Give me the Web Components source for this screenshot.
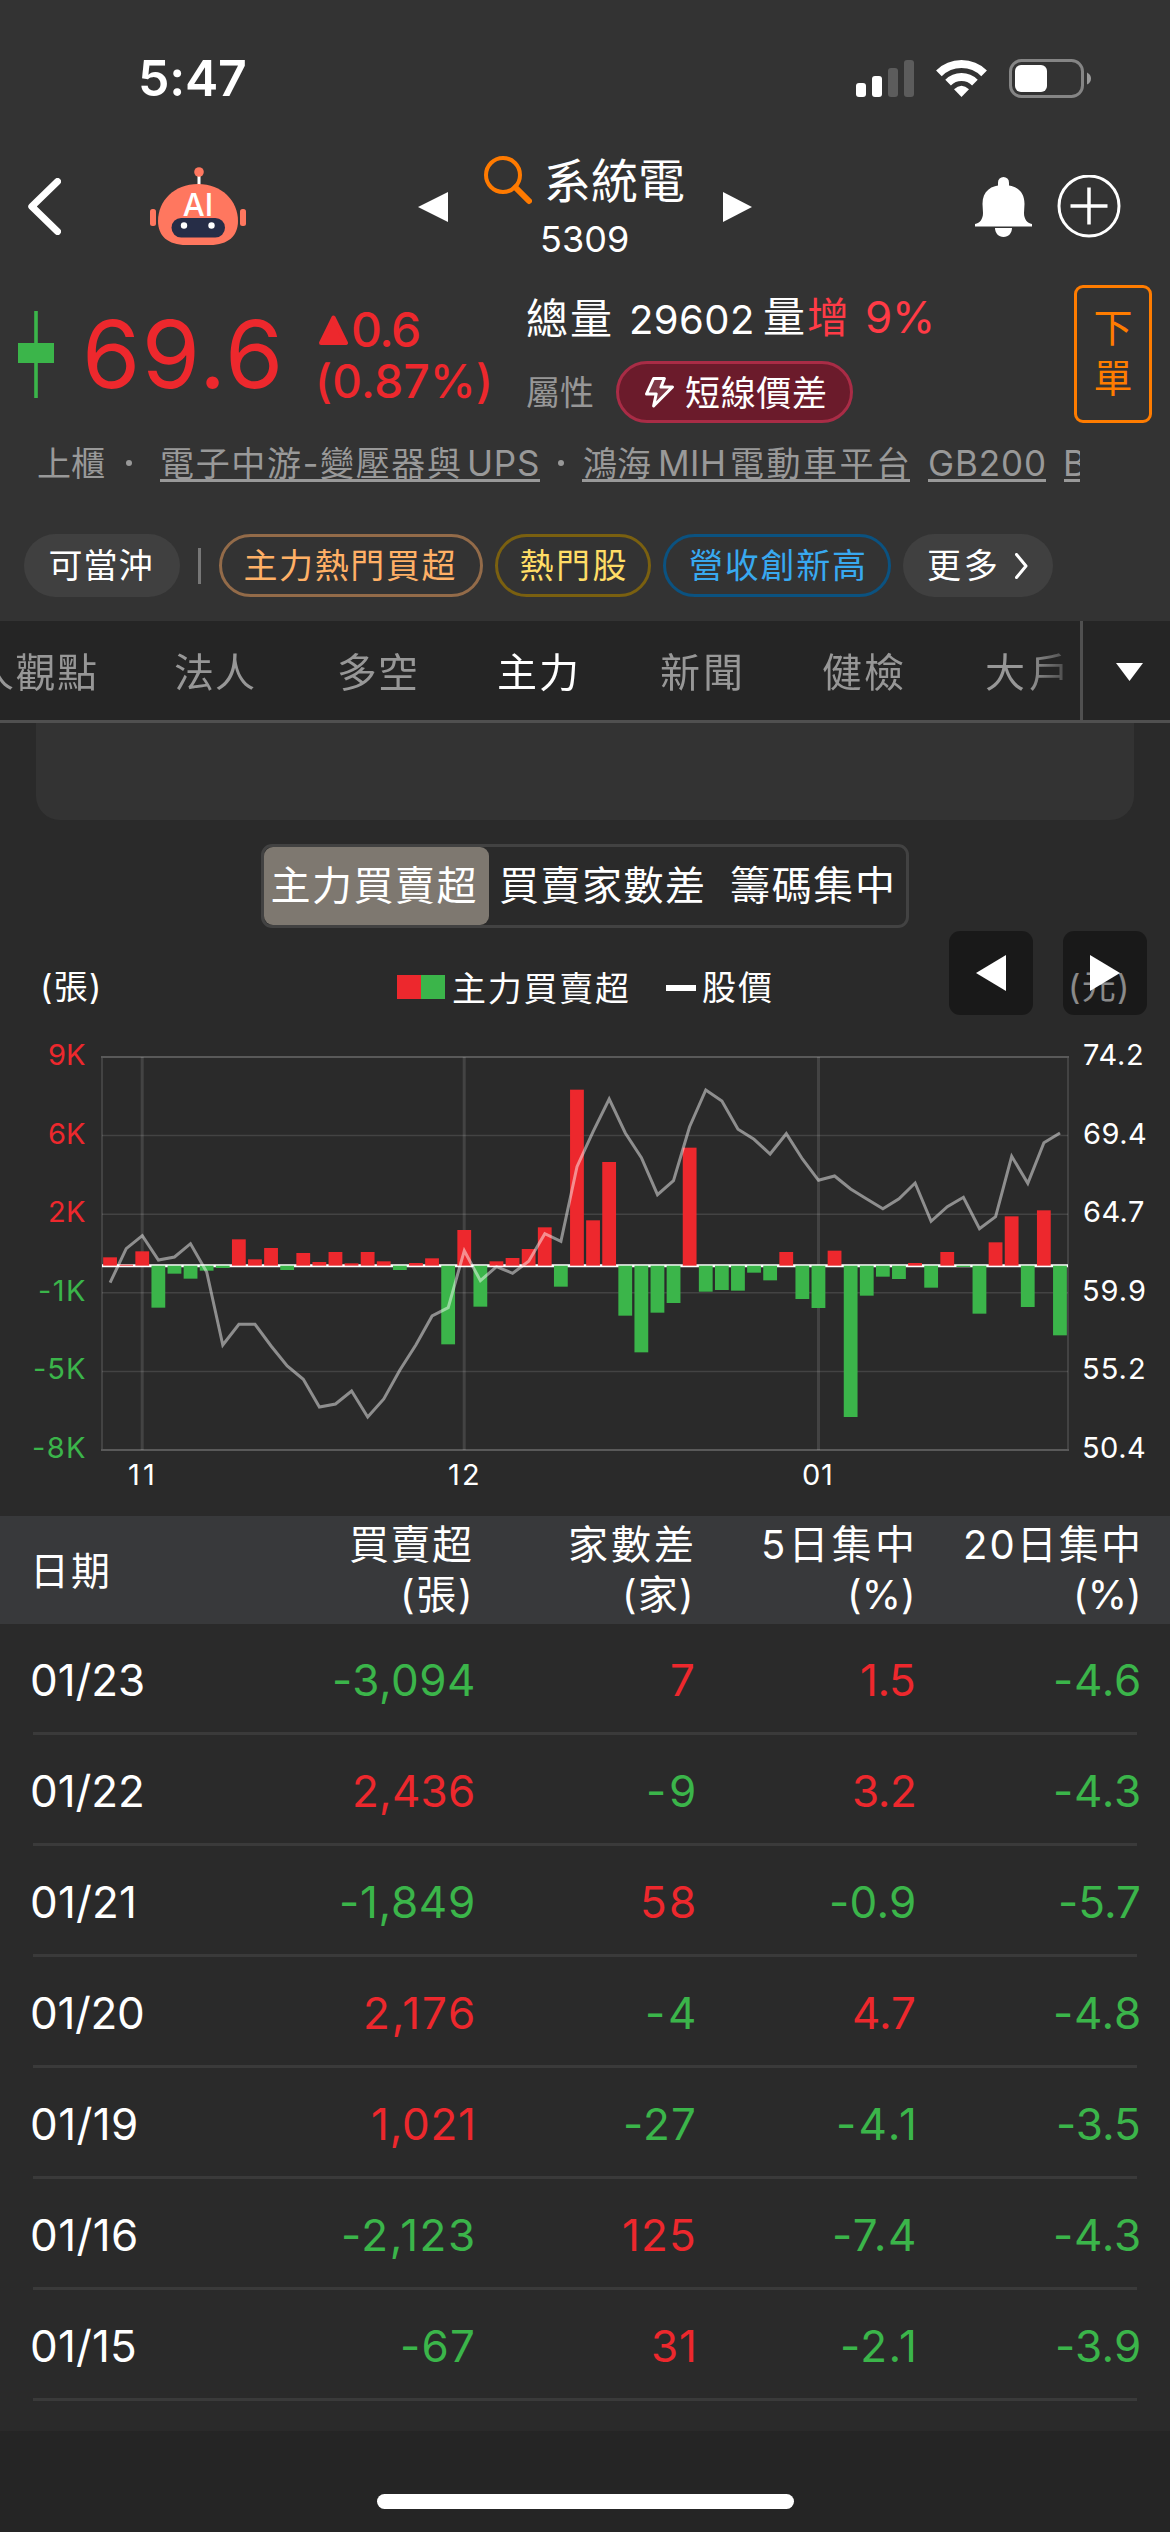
<!DOCTYPE html>
<html lang="zh-Hant">
<head>
<meta charset="utf-8">
<title>系統電 5309</title>
<style>
html,body{margin:0;padding:0;background:#2a2a2a}
body{width:1170px;height:2532px;overflow:hidden;font-family:Inter,"Noto Sans CJK TC",sans-serif;color:#fff}
</style>
</head>
<body>
<stock-app></stock-app>
<script>
const FAMILY = 'Inter, "Noto Sans CJK TC", sans-serif';
const pen = document.createElement('canvas').getContext('2d');

function define(name, html, setup) {
  customElements.define(name, class extends HTMLElement {
    constructor() {
      super();
      const t = document.createElement('template');
      t.innerHTML = typeof html === 'function' ? html() : html;
      this.attachShadow({ mode: 'open' }).appendChild(t.content.cloneNode(true));
    }
    connectedCallback() { if (setup) setup.call(this); }
  });
}

/* Text whose box is the ink of its glyphs: s = size, w = width, wt = weight, v = sample that sets the height */
define('fit-text', `<style>
:host{display:flow-root;flex:none}
span{display:block;white-space:nowrap}
</style><span><slot></slot></span>`, function () {
  const text = this.textContent, s = +this.getAttribute('s'), wt = this.getAttribute('wt') || 400;
  pen.font = `${wt} ${s}px ${FAMILY}`;
  const m = pen.measureText(text), v = pen.measureText(this.getAttribute('v') || text);
  const ink = m.actualBoundingBoxRight + m.actualBoundingBoxLeft;
  const w = +this.getAttribute('w') || ink, n = [...text].length - 1;
  const line = Math.round(s * 1.2);
  const span = this.shadowRoot.querySelector('span');
  this.style.width = w + 'px';
  this.style.height = (v.actualBoundingBoxAscent + v.actualBoundingBoxDescent) + 'px';
  span.style.cssText = `font:${wt} ${s}px/${line}px ${FAMILY};letter-spacing:${n ? (w - ink) / n : 0}px;` +
    `margin-left:${m.actualBoundingBoxLeft}px;` +
    `margin-top:${v.actualBoundingBoxAscent - (line + m.fontBoundingBoxAscent - m.fontBoundingBoxDescent) / 2}px`;
});

define('status-bar', `<style>
:host{display:flex;align-items:center;height:156px;padding:0 79px 0 141px}
svg{display:block}.sig{margin-left:auto}.wifi{margin:0 22px}
</style>
<fit-text s="50" w="104" wt="600">5:47</fit-text>
<svg class="sig" width="58" height="37"><g fill="#fff"><rect y="23" width="10" height="14" rx="3"/><rect x="16" y="16" width="10" height="21" rx="3"/></g><g fill="#5c5c5c"><rect x="32" y="8" width="10" height="29" rx="3"/><rect x="48" width="10" height="37" rx="3"/></g></svg>
<svg class="wifi" width="51" height="37"><g fill="none" stroke="#fff" stroke-width="8"><path d="M2.9 13.4A32 32 0 0 1 48.1 13.4"/><path d="M12.1 22.6A19 19 0 0 1 38.9 22.6"/></g><path fill="#fff" d="M25.5 37L18 29.3Q25.5 22.3 33 29.3Z"/></svg>
<svg width="82" height="39"><rect x="1.5" y="1.5" width="72" height="36" rx="11" fill="none" stroke="#858585" stroke-width="3"/><rect x="6" y="6" width="32" height="27" rx="6" fill="#fff"/><path d="M78 13.5Q82 15.5 82 19.5T78 25.5Z" fill="#9a9a9a"/></svg>`);

define('robot-icon', `<style>:host{display:block;flex:none}svg{display:block}text{font:500 31px Inter,sans-serif}</style>
<svg width="96" height="78" viewBox="150 166 96 78"><path d="M199 174V185" stroke="#fff" stroke-width="3"/><circle cx="199" cy="171" r="4.8" fill="#ff775f"/>
<g fill="#ff775f"><rect x="150" y="208" width="6" height="17" rx="2.5"/><rect x="240" y="208" width="6" height="17" rx="2.5"/><path d="M198 183C222 183 238 200 238 220C238 235 228 244 210 244H186C168 244 158 235 158 220C158 200 174 183 198 183Z"/></g>
<rect x="171.5" y="217" width="53.5" height="19.500" rx="9.700" fill="#262d47"/><circle cx="184" cy="224.500" r="3.200" fill="#fff"/><circle cx="211.500" cy="224.500" r="3.200" fill="#fff"/>
<text x="198" y="215" text-anchor="middle" fill="#fff">AI</text></svg>`);

define('nav-bar', `<style>
:host{display:flex;align-items:center;height:101px;padding:0 49px 0 28px}
svg{display:block;flex:none}
robot-icon{margin-left:89px;margin-bottom:2px}
.l{margin-left:172px}.r{margin-left:39px}
.title{margin-left:36px;align-self:flex-start;width:200px;display:flex;flex-direction:column;align-items:center;gap:23px}
.row{display:flex;width:200px;height:46px;justify-content:space-between;align-items:flex-start}
.row fit-text{margin-top:2px}
.bell{margin-left:auto}.add{margin-left:25px}
</style>
<svg width="33" height="57" fill="none" stroke="#fff" stroke-width="7" stroke-linecap="round" stroke-linejoin="round"><path d="M29.500 3.500L3.800 28.500L29.500 53.500"/></svg>
<robot-icon></robot-icon>
<svg class="l" width="30" height="30"><path d="M0 15L30 0V30Z" fill="#fff"/></svg>
<div class="title"><div class="row"><svg width="48" height="49" fill="none" stroke="#ff7a00"><circle cx="19" cy="19" r="17" stroke-width="4"/><path d="M31.500 31.500L45 45" stroke-width="6" stroke-linecap="round"/></svg><fit-text s="47" w="137">系統電</fit-text></div><fit-text style="margin-left:2px" s="36" w="86">5309</fit-text></div>
<svg class="r" width="30" height="30"><path d="M0 0L29 15L0 30Z" fill="#fff"/></svg>
<svg class="bell" width="57" height="60" fill="#fff"><rect x="23" width="11" height="14" rx="5.500"/><path d="M0 47C5 46 8 42 8 36L7.500 27C7.500 14 16 8 28.500 8C41 8 49.500 14 49.500 27L49 36C49 42 52 46 57 47V49.500H0Z"/><path d="M20 51H37C37 56 33.500 60 28.500 60S20 56 20 51Z"/></svg>
<svg class="add" width="64" height="63" fill="none" stroke="#fff" stroke-width="3"><circle cx="32" cy="31" r="30"/><path d="M13.500 31H50.500M32 12.500V49.500" stroke-width="3.500"/></svg>`);

define('attr-pill', `<style>
:host{display:flex;align-items:center;box-sizing:border-box;width:237px;height:62px;border:3px solid #a92c46;border-radius:31px;background:#6b1b2b;padding-left:26px;gap:12px}
</style><svg width="29" height="31" viewBox="0 0 29 31" fill="#ffffff22" stroke="#fff" stroke-width="3" stroke-linejoin="round"><path d="M8.600 1.500H19.400L16 10H27.500L8.600 29L11.200 17H1.500Z"/></svg><slot></slot>`);

define('quote-panel', `<style>
:host{display:flex;align-items:center;height:138px;padding:28px 18px 0 18px}
svg{display:block;flex:none}
.price{margin-left:33px;color:#ed282d}
.chg{margin:7px 0 0 41px;width:171px;display:flex;flex-direction:column;gap:13px;color:#ed282d}
.chg div{display:flex;gap:5px;align-items:center}
.info{margin-left:37px;align-self:flex-end;height:126px;display:flex;flex-direction:column;justify-content:space-between}
.v{display:flex;height:40px;align-items:center}.v fit-text:nth-child(2){margin:4px 0 0 21px}.v fit-text:nth-child(3){margin-left:12px}
.v .up{color:#ff3b46;margin-left:4px}.v .up2{color:#ff3b46;margin:1px 0 0 19px}
.a{display:flex;align-items:center;gap:23px;color:#979797}.a attr-pill{color:#fff}
.order{margin-left:auto;box-sizing:border-box;width:78px;height:138px;border:3px solid #ff7c00;border-radius:9px;color:#ff7c00;display:flex;flex-direction:column;align-items:center;justify-content:center;gap:15px}
</style>
<svg width="36" height="87" fill="#3bb54a"><rect x="16.200" width="3.600" height="87"/><rect y="32" width="36" height="20"/></svg>
<fit-text class="price" s="94" w="191">69.6</fit-text>
<div class="chg"><div><svg width="29" height="30"><path d="M14.500 2.500L27 28H2Z" fill="#ed282d" stroke="#ed282d" stroke-width="4" stroke-linejoin="round"/></svg><fit-text s="48" w="66" wt="450">0.6</fit-text></div><fit-text s="46" w="170" wt="450">(0.87%)</fit-text></div>
<div class="info"><div class="v"><fit-text s="42" w="84">總量</fit-text><fit-text s="40" w="120">29602</fit-text><fit-text s="42" w="40">量</fit-text><fit-text class="up" s="42" w="40">增</fit-text><fit-text class="up2" s="44" w="64">9%</fit-text></div>
<div class="a"><fit-text s="34" w="66">屬性</fit-text><attr-pill><fit-text s="35" w="140">短線價差</fit-text></attr-pill></div></div>
<div class="order"><fit-text s="39">下</fit-text><fit-text s="39">單</fit-text></div>`);

define('concept-links', `<style>
:host{display:flex;box-sizing:border-box;width:1080px;height:36px;margin-top:23px;padding-left:38px;overflow-x:clip;overflow-y:visible;color:#999}
div{display:flex;flex:none;height:33px;align-items:center}
.a{border-bottom:3px solid #999;padding:0 2px}
i{width:6px;height:6px;border-radius:3px;background:#999}
</style>
<div><fit-text s="34" w="66">上櫃</fit-text></div><div style="margin:0 28px 0 22px"><i></i></div>
<div class="a"><fit-text s="34" w="298">電子中游-變壓器與</fit-text><fit-text style="margin-left:10px" s="35" w="68">UPS</fit-text></div><div style="margin:0 18px"><i></i></div>
<div class="a"><fit-text s="34" w="66">鴻海</fit-text><fit-text style="margin-left:11px" s="35" w="62">MIH</fit-text><fit-text style="margin-left:9px" s="34" w="176">電動車平台</fit-text></div>
<div class="a" style="margin-left:18px"><fit-text s="35" w="114">GB200</fit-text></div>
<div class="a" style="margin-left:18px"><fit-text s="35">B</fit-text></div>`);

define('tag-pill', `<style>
:host{display:flex;align-items:center;justify-content:center;flex:none;box-sizing:border-box;height:63px;border:3px solid var(--line,transparent);border-radius:32px;gap:19px}
:host([solid]){background:#404040;border:0}
</style><slot></slot>`, function () { this.style.width = this.getAttribute('width') + 'px'; });

define('tag-row', `<style>
:host{display:flex;align-items:center;margin-top:52px;padding-left:24px;gap:12px}
hr{width:3px;height:36px;border:0;background:#777;margin:0 6px}
</style>
<tag-pill solid width="156"><fit-text style="margin-right:4px" s="34" w="101" v="國">可當沖</fit-text></tag-pill><hr>
<tag-pill width="264" style="--line:#936b49;color:#ffb066"><fit-text style="margin-right:3px" s="34" w="210" v="國">主力熱門買超</fit-text></tag-pill>
<tag-pill width="156" style="--line:#7a6010;color:#ffdd66"><fit-text s="34" w="105" v="國">熱門股</fit-text></tag-pill>
<tag-pill width="228" style="--line:#0b5280;color:#38a9f0"><fit-text s="34" w="174" v="國">營收創新高</fit-text></tag-pill>
<tag-pill solid width="150"><fit-text s="34" w="68" v="國">更多</fit-text><svg width="13" height="26" fill="none" stroke="#fff" stroke-width="3" stroke-linecap="round" stroke-linejoin="round"><path d="M1.500 1.500L11 13L1.500 24.500"/></svg></tag-pill>`);

define('tab-strip', `<style>
:host{display:flex;margin-top:24px;height:99px;background:#252525;border-bottom:3px solid #505050}
.tabs{width:1080px;overflow:hidden;display:flex;align-items:center;color:#979797;-webkit-mask:linear-gradient(90deg,#000 1028px,transparent 1085px);mask:linear-gradient(90deg,#000 1028px,transparent 1085px)}
.tabs fit-text{margin:5px 82px 0 0}
.on{color:#fff}
.more{width:87px;border-left:3px solid #505050;display:flex;align-items:center;justify-content:center}
.more svg{margin:3px 0 0 5px}
</style>
<div class="tabs"><fit-text style="margin-left:-25px;margin-right:79px" s="40" w="121" v="國">人觀點</fit-text><fit-text s="40" w="79" v="國" style="margin-right:85px">法人</fit-text><fit-text s="40" w="77" v="國" style="margin-right:83px">多空</fit-text><fit-text class="on" s="40" w="77" v="國" style="margin-right:85px">主力</fit-text><fit-text s="40" w="79" v="國" style="margin-right:83px">新聞</fit-text><fit-text s="40" w="80" v="國" style="margin-right:83px">健檢</fit-text><fit-text s="40" w="77" v="國">大戶</fit-text></div>
<div class="more"><svg width="27" height="18"><path d="M0 0H27L13.500 18Z" fill="#fff"/></svg></div>`);

define('segment-control', `<style>
:host{display:flex;box-sizing:border-box;width:648px;height:84px;margin:24px 0 0 261px;border:3px solid #424242;border-radius:11px;align-items:center}
.on{width:225px;height:78px;background:#7e7870;border-radius:9px;display:flex;align-items:center;justify-content:center}
</style><div class="on"><fit-text style="margin-right:5px" s="40" w="203" v="國">主力買賣超</fit-text></div><fit-text style="margin-left:11px" s="40" w="203" v="國">買賣家數差</fit-text><fit-text style="margin-left:28px" s="40" w="161" v="國">籌碼集中</fit-text>`);

define('pager-buttons', `<style>
:host{position:absolute;left:949px;top:-40px;display:flex;gap:30px}
div{width:84px;height:84px;border-radius:11px;background:rgba(0,0,0,.4);display:flex;align-items:center;justify-content:center}
</style><div><svg width="30" height="36" style="margin-right:1px"><path d="M0 18L30 0V36Z" fill="#fff"/></svg></div><div><svg width="30" height="36"><path d="M30 18L0 0V36Z" fill="#fff"/></svg></div>`);

define('chart-legend', `<style>
:host{position:relative;display:flex;align-items:center;height:33px;margin-top:43px;padding-left:43px}
i{width:24px;height:24px;background:#ed282d;margin-top:-2px}i+i{background:#3bb54a}
b{width:30px;height:6px;background:#fff;margin:0 7px 0 38px}
.yuan{color:#e6e6e6;margin-left:300px}
</style><fit-text s="34" w="55">(張)</fit-text><i style="margin-left:299px"></i><i></i><fit-text style="margin-left:8px" s="34" w="175">主力買賣超</fit-text><b></b><fit-text s="34" w="68">股價</fit-text><fit-text class="yuan" s="34" w="55" v="(張)">(元)</fit-text><pager-buttons></pager-buttons>`);

/* Bar and price values as offsets in thirds of a pixel from y = 1040 */
const BARS = [652,674,634,803,701,716,692,684,598,658,624,690,639,666,636,670,636,664,690,669,655,913,570,800,664,654,627,562,740,149,541,366,827,937,818,789,323,755,750,752,698,721,636,777,804,632,1131,767,710,717,669,743,636,681,821,607,529,801,511,886];
const PRICE = [728,626,587,660,651,611,696,915,853,853,918,978,1018,1101,1092,1053,1131,1077,990,914,828,803,632,722,680,700,664,581,604,380,275,177,279,353,464,422,260,150,183,268,298,342,281,357,421,408,447,477,506,476,429,544,500,472,566,530,349,430,308,279];

define('price-chart', () => {
  const cx = i => 8.05 + i * 16.1, y = v => v / 3 - 17;
  const zero = y(677);
  const bars = BARS.map((v, i) => {
    const up = v < 677, t = y(v);
    return `<rect x="${(cx(i) - 6.9).toFixed(2)}" y="${(up ? t : zero).toFixed(2)}" width="13.8" height="${Math.abs(t - zero).toFixed(2)}" fill="${up ? '#ed282d' : '#3bb54a'}"/>`;
  }).join('');
  const h = [78.6, 157.2, 235.8, 314.4].map(v => `<path d="M0 ${v}H966" stroke-width="1.5"/>`).join('');
  const lab = (a, x) => a.map(([t, w]) => `<fit-text s="29" w="${w}" ${x || ''} v="0">${t}</fit-text>`).join('');
  return `<style>
:host{display:block;height:441px;margin-top:40px}
.body{display:flex;height:414px}
.y{display:flex;flex-direction:column;justify-content:space-between}
.l{width:85px;align-items:flex-end;color:#3bb54a}.l fit-text:nth-child(-n+3){color:#ed282d}
svg{display:block;margin:13px 16px 0 17px;overflow:visible}
.x{display:flex;margin-top:6px;padding-left:129px}
</style>
<div class="body"><div class="y l">${lab([['9K',36],['6K',36],['2K',35],['-1K',45],['-5K',50],['-8K',51]])}</div>
<svg width="966" height="393"><g stroke="#fff" stroke-opacity=".12" fill="none"><rect x="0" y="0" width="966" height="393" stroke-width="2"/><path d="M-1 0H967M-1 393H967" stroke-width="2"/>${h}<path d="M40.2 0V393M362.2 0V393M716.500 0V393" stroke-width="3"/></g>
<path d="M0 ${zero}H966" stroke="#fff" stroke-width="3"/>${bars}
<polyline points="${PRICE.map((v, i) => cx(i).toFixed(1) + ',' + y(v).toFixed(1)).join(' ')}" fill="none" stroke="#fff" stroke-opacity=".47" stroke-width="3"/></svg>
<div class="y">${lab([['74.2',58],['69.4',62],['64.7',60],['59.9',61],['55.2',60],['50.4',61]])}</div></div>
<div class="x"><fit-text s="29" w="24" v="0">11</fit-text><fit-text style="margin-left:296px" s="29" w="29" v="0">12</fit-text><fit-text style="margin-left:325px" s="29" w="28" v="0">01</fit-text></div>`;
});

const ROWS = [
  [['01/23',111],['-3,094',138],['7',22],['1.5',52],['-4.6',83]],
  [['01/22',110],['2,436',118],['-9',45],['3.2',60],['-4.3',83]],
  [['01/21',102],['-1,849',131],['58',51],['-0.9',82],['-5.7',78]],
  [['01/20',111],['2,176',107],['-4',46],['4.7',60],['-4.8',83]],
  [['01/19',104],['1,021',100],['-27',68],['-4.1',75],['-3.5',80]],
  [['01/16',104],['-2,123',129],['125',70],['-7.4',79],['-4.3',83]],
  [['01/15',103],['-67',70],['31',41],['-2.1',71],['-3.9',81]]
];
define('broker-table', () => `<style>
:host{display:block;margin-top:31px}
.g{display:grid;grid-template-columns:150px 290px 221px 220px 224px;align-items:center;justify-items:end;padding-left:33px}
.g>:first-child{justify-self:start}
.head{height:108px;background:#38393b;padding-right:33px}
.head div{display:flex;flex-direction:column;align-items:flex-end;gap:14px;margin:3px 2px 0 0}
.head div:last-child{margin-right:0}
.head div fit-text+fit-text{margin-right:2px}
.row{margin:0 33px;padding:5px 0 0;height:103px;border-bottom:3px solid #3a3a3a}
.row:nth-child(2){height:101px}
.row>:last-child{margin-right:-1px}
.row>:first-child{margin-left:-1px}
.up{color:#ed282d}.down{color:#3bb54a}
</style>
<div class="head g"><fit-text style="margin:1px 0 0 3px" s="39" w="72">日期</fit-text>
<div><fit-text s="40" w="121" v="國">買賣超</fit-text><fit-text s="40" w="65" v="(張)">(張)</fit-text></div>
<div><fit-text s="40" w="122" v="國">家數差</fit-text><fit-text s="40" w="64" v="(張)">(家)</fit-text></div>
<div><fit-text s="40" w="148" v="國">5日集中</fit-text><fit-text style="margin-right:0" s="40" w="61" v="(張)">(%)</fit-text></div>
<div><fit-text s="40" w="172" v="國">20日集中</fit-text><fit-text style="margin-right:0" s="40" w="61" v="(張)">(%)</fit-text></div></div>` +
ROWS.map(r => '<div class="row g" style="padding-left:0">' + r.map(([t, w], i) => `<fit-text s="44" w="${w}" v="0" class="${i ? (t[0] === '-' ? 'down' : 'up') : ''}">${t}</fit-text>`).join('') + '</div>').join(''));

define('home-bar', `<style>
:host{display:flex;justify-content:center;box-sizing:border-box;height:102px;margin-top:30px;padding-top:63px;background:#252525}
div{width:417px;height:15px;border-radius:8px;background:#fff}
</style><div></div>`);

define('stock-app', `<style>
:host{display:block;width:1170px;height:2532px;background:#2a2a2a;overflow:hidden}
.top{display:flow-root;background:#333}
.card{height:97px;margin:0 36px;background:#333;border-radius:0 0 24px 24px}
</style>
<div class="top"><status-bar></status-bar><nav-bar></nav-bar><quote-panel></quote-panel><concept-links></concept-links><tag-row></tag-row><tab-strip></tab-strip></div>
<div class="card"></div>
<segment-control></segment-control><chart-legend></chart-legend><price-chart></price-chart><broker-table></broker-table><home-bar></home-bar>`);
</script>
</body>
</html>
